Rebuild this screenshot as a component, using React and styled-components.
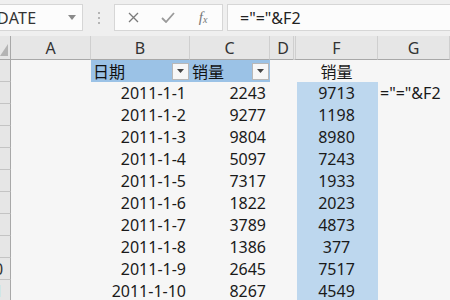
import styled, { createGlobalStyle } from "styled-components";

const GlobalStyle = createGlobalStyle`
  html, body {
    margin: 0;
    padding: 0;
    background: #f6f6f6;
    overflow: hidden;
  }
  body {
    font-family: "Noto Sans", "Noto Sans CJK SC", sans-serif;
  }
`;

const dates = [
  ["2011-1-1", 2243, 9713],
  ["2011-1-2", 9277, 1198],
  ["2011-1-3", 9804, 8980],
  ["2011-1-4", 5097, 7243],
  ["2011-1-5", 7317, 1933],
  ["2011-1-6", 1822, 2023],
  ["2011-1-7", 3789, 4873],
  ["2011-1-8", 1386, 377],
  ["2011-1-9", 2645, 7517],
  ["2011-1-10", 8267, 4549],
];

function App() {
  return (
    <Page>
      <GlobalStyle />
      <FormulaBar>
        <NameBox>
          <NameText>DATE</NameText>
          <SmallArrow viewBox="0 0 8 5">
            <path d="M0 0h8L4 5z" fill="#8a8a8a" />
          </SmallArrow>
        </NameBox>
        <Grip>
          <Dot />
          <Dot />
          <Dot />
        </Grip>
        <ButtonBox>
          <IconSlot width={38}>
            <svg width="11" height="11" viewBox="0 0 11 11">
              <path d="M1 1l9 9M10 1l-9 9" stroke="#7a7a7a" strokeWidth="1.3" />
            </svg>
          </IconSlot>
          <IconSlot width={32}>
            <svg width="14" height="11" viewBox="0 0 14 11">
              <path d="M1 6l4 4L13 1" stroke="#9a9a9a" strokeWidth="1.8" fill="none" />
            </svg>
          </IconSlot>
          <IconSlot width={38}>
            <Fx>
              f<sub>x</sub>
            </Fx>
          </IconSlot>
        </ButtonBox>
        <FormulaInput>="="&amp;F2</FormulaInput>
      </FormulaBar>

      <Sheet>
        <Corner>
          <svg width="8" height="12" viewBox="0 0 8 12">
            <path d="M8 0v12H0z" fill="#b4b4b4" />
          </svg>
        </Corner>
        <ColHead>A</ColHead>
        <ColHead>B</ColHead>
        <ColHead>C</ColHead>
        <ColHead>D</ColHead>
        <ColHead hiddenBefore>F</ColHead>
        <ColHead>G</ColHead>

        <RowHead>
          <RowNum>1</RowNum>
        </RowHead>
        <Cell />
        <Cell fill="#9bc2e6">
          <HeadText>日期</HeadText>
          <FilterButton>
            <svg width="7" height="4" viewBox="0 0 7 4">
              <path d="M0 0h7L3.5 4z" fill="#444" />
            </svg>
          </FilterButton>
        </Cell>
        <Cell fill="#9bc2e6">
          <HeadText>销量</HeadText>
          <FilterButton>
            <svg width="7" height="4" viewBox="0 0 7 4">
              <path d="M0 0h7L3.5 4z" fill="#444" />
            </svg>
          </FilterButton>
        </Cell>
        <Cell />
        <Cell align="center">销量</Cell>
        <Cell />

        {dates.map(([d, c, f], i) => (
          <Row key={d}>
            <RowHead>
              <RowNum>{i + 2}</RowNum>
            </RowHead>
            <Cell />
            <Cell align="flex-end">{d}</Cell>
            <Cell align="flex-end">{c}</Cell>
            <Cell />
            <Cell align="center" fill="#bdd7ee">
              {f}
            </Cell>
            <Cell align="flex-start">{i === 0 ? '="="&F2' : ""}</Cell>
          </Row>
        ))}
      </Sheet>
    </Page>
  );
}

const Row = styled.div`
  display: contents;
`;

const Page = styled.div`
  width: 450px;
  height: 300px;
  overflow: hidden;
  background: #f6f6f6;
  color: #1a1a1a;
`;

const FormulaBar = styled.div`
  display: flex;
  align-items: flex-start;
  height: 36px;
  box-sizing: border-box;
  padding-top: 4px;
  background: #efefef;
`;

const Box = styled.div`
  height: 27px;
  box-sizing: border-box;
  background: #fcfcfc;
  border: 1px solid #d6d6d6;
  display: flex;
  align-items: center;
`;

const NameBox = styled(Box)`
  width: 83px;
  border-left: none;
  justify-content: space-between;
  padding-right: 6px;
  overflow: hidden;
`;

const NameText = styled.span`
  font-size: 16px;
  color: #333;
  margin-left: -3px;
  letter-spacing: 0.3px;
`;

const SmallArrow = styled.svg`
  width: 8px;
  height: 5px;
`;

const Grip = styled.div`
  width: 31px;
  height: 27px;
  display: flex;
  flex-direction: column;
  align-items: center;
  justify-content: center;
  gap: 3px;
`;

const Dot = styled.span`
  width: 2px;
  height: 2px;
  background: #b5b5b5;
`;

const ButtonBox = styled(Box)`
  width: 109px;
`;

const IconSlot = styled.div`
  width: ${(p) => p.width}px;
  display: flex;
  justify-content: center;
  align-items: center;
`;

const Fx = styled.span`
  font-family: "Liberation Serif", serif;
  font-style: italic;
  font-size: 15px;
  color: #777;
  sub {
    font-size: 10px;
    vertical-align: -1px;
  }
`;

const FormulaInput = styled(Box)`
  flex: 1;
  margin-left: 4px;
  border-right: none;
  padding-left: 12px;
  font-size: 16px;
  color: #222;
`;

const Sheet = styled.div`
  display: grid;
  grid-template-columns: 11px 80px 99px 80px 27px 81px 1fr;
  grid-template-rows: 24px;
  grid-auto-rows: 22px;
`;

const Corner = styled.div`
  background: #e6e6e6;
  border-right: 1px solid #a8a8a8;
  border-bottom: 1px solid #a8a8a8;
  box-sizing: border-box;
  display: flex;
  align-items: flex-end;
  padding-bottom: 3px;
  overflow: hidden;
`;

const ColHead = styled.div`
  background: #e6e6e6;
  border-bottom: 1px solid #a8a8a8;
  border-right: 1px solid #cfcfcf;
  ${(p) => (p.hiddenBefore ? "border-left: 3px double #cfcfcf;" : "")}
  margin-left: ${(p) => (p.hiddenBefore ? "-4px" : "0")};
  box-sizing: border-box;
  display: flex;
  align-items: center;
  justify-content: center;
  font-size: 16px;
  color: #333;
`;

const RowHead = styled.div`
  background: #e6e6e6;
  border-right: 1px solid #a8a8a8;
  border-bottom: 1px solid #c4c4c4;
  box-sizing: border-box;
  display: flex;
  justify-content: flex-end;
  align-items: center;
  overflow: hidden;
`;

const RowNum = styled.span`
  flex-shrink: 0;
  width: 32px;
  text-align: center;
  font-size: 16px;
  color: #333;
`;

const Cell = styled.div`
  background: ${(p) => p.fill || "transparent"};
  display: flex;
  align-items: center;
  justify-content: ${(p) => p.align || "space-between"};
  padding: 0 4px 0 2px;
  font-size: 16px;
  white-space: nowrap;
  overflow: visible;
  min-width: 0;
`;

const HeadText = styled.span`
  color: #111;
`;

const FilterButton = styled.span`
  width: 17px;
  height: 17px;
  box-sizing: border-box;
  background: #f7f7f7;
  border: 1px solid #b8b8b8;
  display: flex;
  align-items: center;
  justify-content: center;
  margin-right: -3px;
`;

export default App;
